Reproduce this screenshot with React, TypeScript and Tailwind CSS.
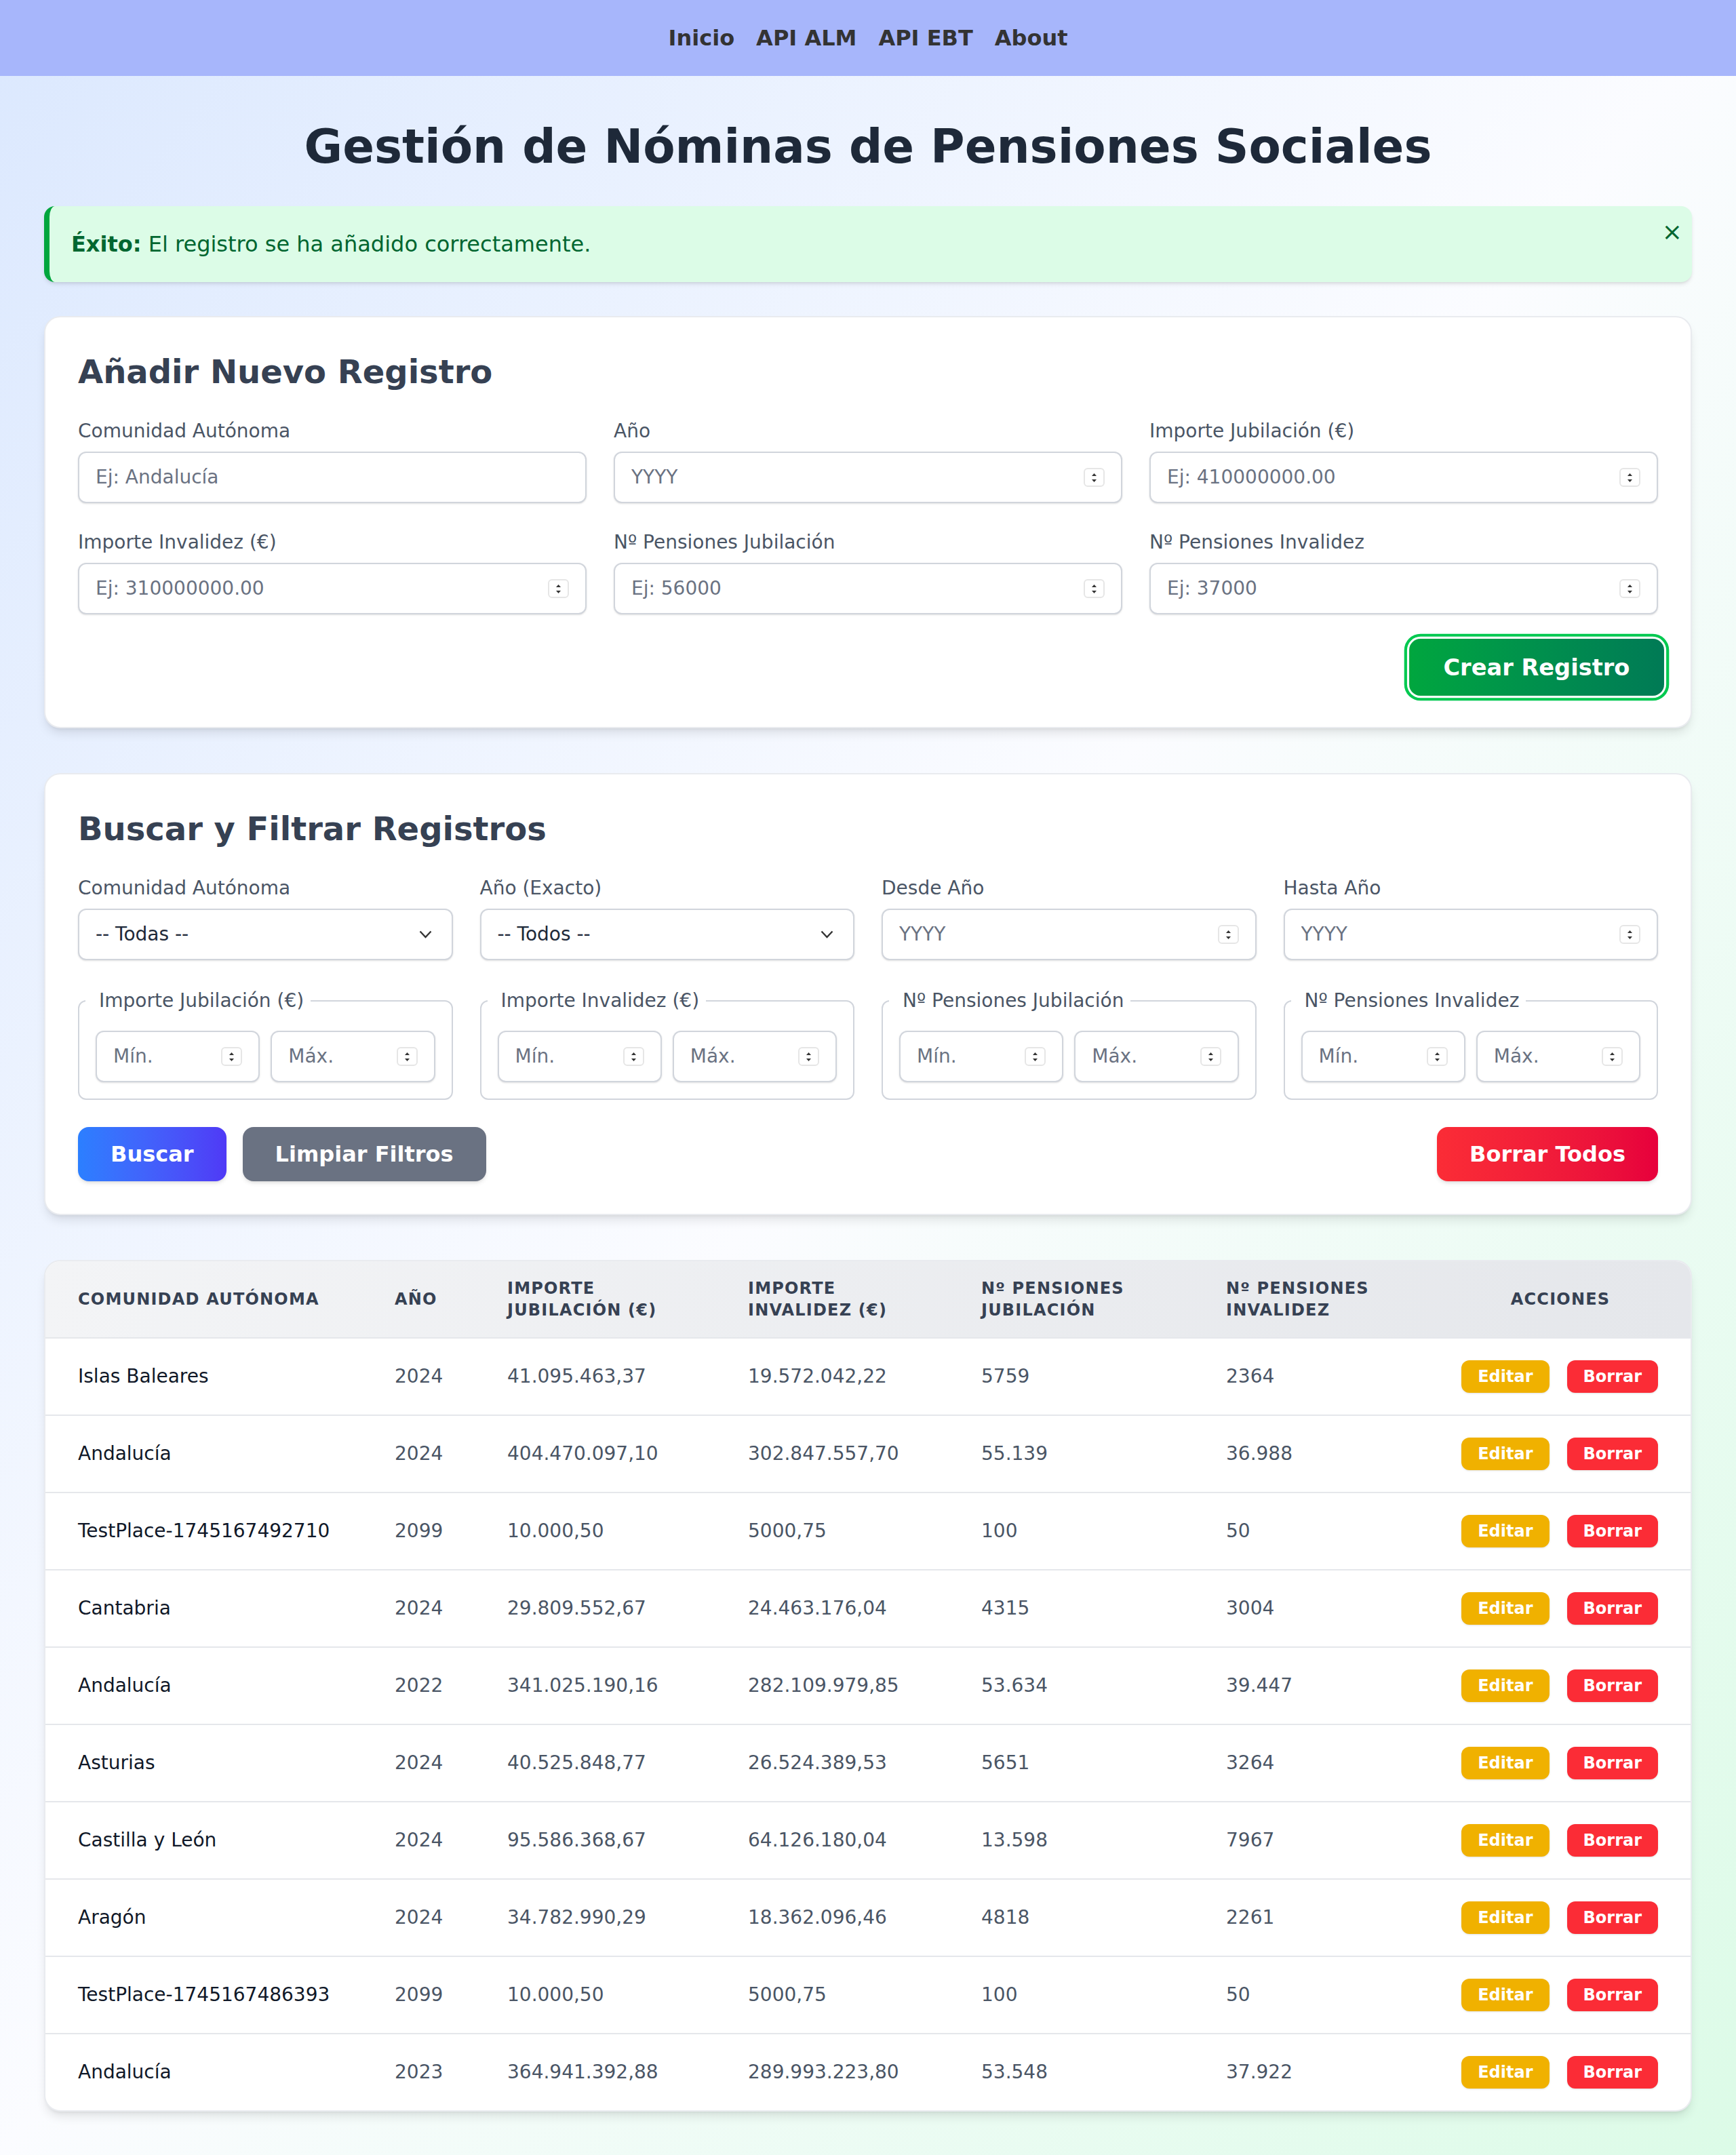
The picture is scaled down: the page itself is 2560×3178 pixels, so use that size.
import React from "react";

const rows = [
  ["Islas Baleares", "2024", "41.095.463,37", "19.572.042,22", "5759", "2364"],
  ["Andalucía", "2024", "404.470.097,10", "302.847.557,70", "55.139", "36.988"],
  ["TestPlace-1745167492710", "2099", "10.000,50", "5000,75", "100", "50"],
  ["Cantabria", "2024", "29.809.552,67", "24.463.176,04", "4315", "3004"],
  ["Andalucía", "2022", "341.025.190,16", "282.109.979,85", "53.634", "39.447"],
  ["Asturias", "2024", "40.525.848,77", "26.524.389,53", "5651", "3264"],
  ["Castilla y León", "2024", "95.586.368,67", "64.126.180,04", "13.598", "7967"],
  ["Aragón", "2024", "34.782.990,29", "18.362.096,46", "4818", "2261"],
  ["TestPlace-1745167486393", "2099", "10.000,50", "5000,75", "100", "50"],
  ["Andalucía", "2023", "364.941.392,88", "289.993.223,80", "53.548", "37.922"],
];

function Spinner() {
  return (
    <div className="w-[31px] h-[28px] shrink-0 border-2 border-[#e6e6e6] rounded-md bg-white flex flex-col items-center justify-center gap-[5px]">
      <svg width="7" height="4" viewBox="0 0 7 4">
        <path d="M3.5 0 L7 4 L0 4 Z" fill="#333" />
      </svg>
      <svg width="7" height="4" viewBox="0 0 7 4">
        <path d="M0 0 L7 0 L3.5 4 Z" fill="#333" />
      </svg>
    </div>
  );
}

function Field({ placeholder, number = true }: { placeholder: string; number?: boolean }) {
  return (
    <div className="h-[76px] border-2 border-[#d1d5dc] rounded-xl bg-white shadow-sm flex items-center px-6 gap-2">
      <input
        type="text"
        placeholder={placeholder}
        className="flex-1 min-w-0 bg-transparent outline-none text-[28px] leading-[40px] text-[#1e2939] placeholder:text-[#6a7282]"
      />
      {number && <Spinner />}
    </div>
  );
}

function Labeled({ label, children }: { label: string; children: React.ReactNode }) {
  return (
    <div className="flex flex-col">
      <label className="text-[28px] leading-[40px] text-[#4a5565] mb-[10px]">{label}</label>
      {children}
    </div>
  );
}

function SelectBox({ text }: { text: string }) {
  return (
    <div className="h-[76px] border-2 border-[#d1d5dc] rounded-xl bg-white shadow-sm flex items-center justify-between pl-6 pr-[29px]">
      <span className="text-[28px] leading-[40px] text-[#1e2939]">{text}</span>
      <svg width="19" height="12" viewBox="0 0 19 12">
        <path d="M1.5 1.5 L9.5 10 L17.5 1.5" fill="none" stroke="#333" strokeWidth="2.4" />
      </svg>
    </div>
  );
}

function RangeSet({ legend }: { legend: string }) {
  return (
    <fieldset className="border-2 border-[#d1d5dc] rounded-xl px-6 pb-6 pt-6">
      <legend className="ml-[-15px] pl-[20px] pr-[10px] text-[28px] leading-[40px] text-[#4a5565]">{legend}</legend>
      <div className="grid grid-cols-2 gap-4">
        <Field placeholder="Mín." />
        <Field placeholder="Máx." />
      </div>
    </fieldset>
  );
}

export default function App() {
  return (
    <div className="min-h-screen bg-linear-to-br from-[#dbe8fe] via-[#fbfcff] to-[#dcfbe7] font-['DejaVu_Sans',sans-serif]">
      <nav className="h-[112px] bg-[#a7b6fb] flex items-center justify-center gap-8 text-[32px] leading-[48px] font-bold text-[#333]">
        <a>Inicio</a>
        <a>API ALM</a>
        <a>API EBT</a>
        <a>About</a>
      </nav>

      <main className="px-[65px] pt-16 pb-16">
        <h1 className="text-[69px] leading-[80px] font-bold text-center text-[#1e2939] mb-12">
          Gestión de Nóminas de Pensiones Sociales
        </h1>

        <div className="relative bg-[#dcfce7] border-l-8 border-[#00a63e] rounded-2xl text-[#016630] p-8 text-[32px] leading-[48px] shadow-md mb-[50px]">
          <span className="font-bold">Éxito:</span> El registro se ha añadido correctamente.
          <button className="absolute top-[14px] right-[14px] text-[36px] leading-[48px] text-[#016630]">×</button>
        </div>

        <section className="bg-white rounded-[24px] border-2 border-[#e9ebef] shadow-lg p-12 mb-[66px]">
          <h2 className="text-[48px] leading-[64px] font-bold text-[#364153] mb-9">Añadir Nuevo Registro</h2>
          <div className="grid grid-cols-3 gap-x-10 gap-y-[38px]">
            <Labeled label="Comunidad Autónoma">
              <Field placeholder="Ej: Andalucía" number={false} />
            </Labeled>
            <Labeled label="Año">
              <Field placeholder="YYYY" />
            </Labeled>
            <Labeled label="Importe Jubilación (€)">
              <Field placeholder="Ej: 410000000.00" />
            </Labeled>
            <Labeled label="Importe Invalidez (€)">
              <Field placeholder="Ej: 310000000.00" />
            </Labeled>
            <Labeled label="Nº Pensiones Jubilación">
              <Field placeholder="Ej: 56000" />
            </Labeled>
            <Labeled label="Nº Pensiones Invalidez">
              <Field placeholder="Ej: 37000" />
            </Labeled>
          </div>
          <div className="flex justify-end mt-[38px]">
            <button className="scale-105 ring-4 ring-[#00c950] ring-offset-[3px] rounded-2xl bg-linear-to-r from-[#00a63e] to-[#007a55] text-white font-bold text-[32px] leading-[48px] px-12 py-4 shadow-md">
              Crear Registro
            </button>
          </div>
        </section>

        <section className="bg-white rounded-[24px] border-2 border-[#e9ebef] shadow-lg p-12 mb-[66px]">
          <h2 className="text-[48px] leading-[64px] font-bold text-[#364153] mb-9">Buscar y Filtrar Registros</h2>
          <div className="grid grid-cols-4 gap-10">
            <Labeled label="Comunidad Autónoma">
              <SelectBox text="-- Todas --" />
            </Labeled>
            <Labeled label="Año (Exacto)">
              <SelectBox text="-- Todos --" />
            </Labeled>
            <Labeled label="Desde Año">
              <Field placeholder="YYYY" />
            </Labeled>
            <Labeled label="Hasta Año">
              <Field placeholder="YYYY" />
            </Labeled>
          </div>
          <div className="grid grid-cols-4 gap-10 mt-10">
            <RangeSet legend="Importe Jubilación (€)" />
            <RangeSet legend="Importe Invalidez (€)" />
            <RangeSet legend="Nº Pensiones Jubilación" />
            <RangeSet legend="Nº Pensiones Invalidez" />
          </div>
          <div className="flex justify-between items-center mt-10">
            <div className="flex gap-6">
              <button className="rounded-2xl bg-linear-to-r from-[#2b7fff] to-[#4f39f6] text-white font-bold text-[32px] leading-[48px] px-12 py-4 shadow-md">
                Buscar
              </button>
              <button className="rounded-2xl bg-[#6a7282] text-white font-bold text-[32px] leading-[48px] px-12 py-4 shadow-md">
                Limpiar Filtros
              </button>
            </div>
            <button className="rounded-2xl bg-linear-to-r from-[#fb2c36] to-[#e7003c] text-white font-bold text-[32px] leading-[48px] px-12 py-4 shadow-md">
              Borrar Todos
            </button>
          </div>
        </section>

        <section className="bg-white rounded-[24px] border-2 border-[#e9ebef] shadow-lg overflow-hidden">
          <table className="w-full table-fixed border-collapse">
            <colgroup>
              <col className="w-[467px]" />
              <col className="w-[166px]" />
              <col className="w-[355px]" />
              <col className="w-[344px]" />
              <col className="w-[361px]" />
              <col className="w-[349px]" />
              <col />
            </colgroup>
            <thead>
              <tr className="bg-linear-to-r from-[#f3f4f6] to-[#e5e7eb] text-[24px] leading-[32px] font-bold uppercase tracking-wider text-[#364153]">
                <th className="px-12 py-6 text-left font-bold">Comunidad Autónoma</th>
                <th className="px-12 py-6 text-left font-bold">Año</th>
                <th className="px-12 py-6 text-left font-bold">Importe Jubilación (€)</th>
                <th className="px-12 py-6 text-left font-bold">Importe Invalidez (€)</th>
                <th className="px-12 py-6 text-left font-bold">Nº Pensiones Jubilación</th>
                <th className="px-12 py-6 text-left font-bold">Nº Pensiones Invalidez</th>
                <th className="px-12 py-6 text-center font-bold">Acciones</th>
              </tr>
            </thead>
            <tbody>
              {rows.map((r, i) => (
                <tr key={i} className="border-t-2 border-[#e5e7eb] text-[28px] leading-[40px]">
                  <td className="px-12 py-8 text-[#101828] whitespace-nowrap">{r[0]}</td>
                  <td className="px-12 py-8 text-[#4a5565]">{r[1]}</td>
                  <td className="px-12 py-8 text-[#4a5565]">{r[2]}</td>
                  <td className="px-12 py-8 text-[#4a5565]">{r[3]}</td>
                  <td className="px-12 py-8 text-[#4a5565]">{r[4]}</td>
                  <td className="px-12 py-8 text-[#4a5565]">{r[5]}</td>
                  <td className="px-12 py-8">
                    <div className="flex justify-end gap-[26px]">
                      <button className="rounded-xl bg-[#f0b100] text-white font-bold text-[24px] leading-[32px] px-6 py-2 shadow-sm">
                        Editar
                      </button>
                      <button className="rounded-xl bg-[#fb2c36] text-white font-bold text-[24px] leading-[32px] px-6 py-2 shadow-sm">
                        Borrar
                      </button>
                    </div>
                  </td>
                </tr>
              ))}
            </tbody>
          </table>
        </section>
      </main>
    </div>
  );
}
